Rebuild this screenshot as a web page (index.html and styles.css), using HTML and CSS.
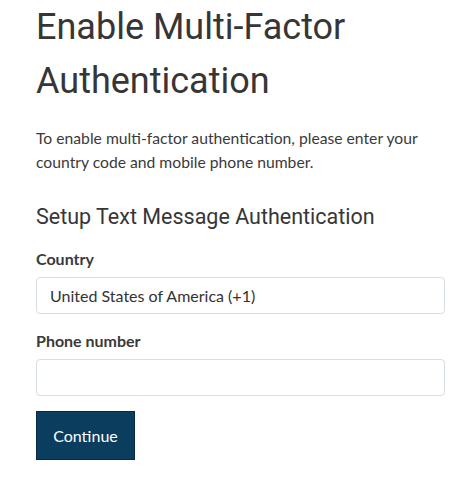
FILE: index.html
```html
<!DOCTYPE html>
<html>
<head>
<meta charset="utf-8">
<link rel="stylesheet" href="styles.css">
</head>
<body>
<main class="page">
  <h1 class="title">Enable Multi-Factor Authentication</h1>
  <p class="intro">To enable multi-factor authentication, please enter your country code and mobile phone number.</p>
  <h2 class="subtitle">Setup Text Message Authentication</h2>
  <form class="form">
    <div class="field">
      <label class="label">Country</label>
      <div class="input">United States of America (+1)</div>
    </div>
    <div class="field">
      <label class="label">Phone number</label>
      <div class="input"></div>
    </div>
    <button type="button" class="btn">Continue</button>
  </form>
</main>
</body>
</html>
```
FILE: styles.css
```css
html, body {
  margin: 0;
  padding: 0;
  background: #ffffff;
}
.page {
  padding: 0 28px 0 36px;
  color: #333333;
  font-family: Lato, "Liberation Sans", sans-serif;
}
.title {
  margin: 0;
  font-family: Roboto, sans-serif;
  font-weight: 400;
  font-size: 36px;
  line-height: 54px;
  color: #363636;
  width: 380px;
}
.intro {
  margin: 18px 0 0;
  font-size: 15.7px;
  line-height: 24px;
  color: #3a3a3a;
}
.subtitle {
  margin: 30px 0 0;
  font-family: Roboto, sans-serif;
  font-weight: 400;
  font-size: 21.5px;
  line-height: 26px;
  color: #363636;
}
.form {
  display: flex;
  flex-direction: column;
  margin-top: 17px;
}
.field {
  display: flex;
  flex-direction: column;
  gap: 6px;
  margin-bottom: 15px;
}
.label {
  font-weight: 700;
  font-size: 16px;
  line-height: 24px;
  color: #3a3a3a;
}
.input {
  box-sizing: border-box;
  height: 37px;
  border: 1px solid #d6dee6;
  border-radius: 4px;
  padding: 0 13px;
  font-size: 16px;
  line-height: 35px;
  color: #333333;
}
.btn {
  align-self: flex-start;
  margin-top: 0;
  width: 99px;
  height: 49px;
  background: #0b3d5f;
  border: 1px solid #062a43;
  border-radius: 0;
  color: #ffffff;
  font-family: Lato, "Liberation Sans", sans-serif;
  font-size: 16px;
  padding: 0;
}
```
